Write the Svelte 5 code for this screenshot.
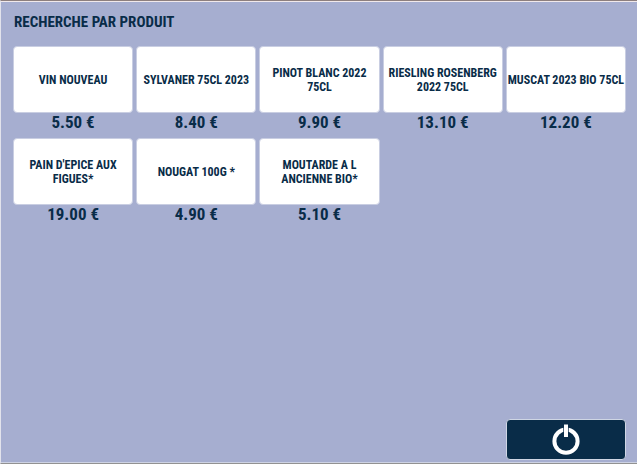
<script>
  const products = [
    { name: 'VIN NOUVEAU', price: '5.50 €' },
    { name: 'SYLVANER 75CL 2023', price: '8.40 €' },
    { name: 'PINOT BLANC 2022 75CL', price: '9.90 €' },
    { name: 'RIESLING ROSENBERG 2022 75CL', price: '13.10 €' },
    { name: 'MUSCAT 2023 BIO 75CL', price: '12.20 €' },
    { name: "PAIN D'EPICE AUX FIGUES*", price: '19.00 €' },
    { name: 'NOUGAT 100G *', price: '4.90 €' },
    { name: 'MOUTARDE A L ANCIENNE BIO*', price: '5.10 €' }
  ];
</script>

<main class="panel">
  <h1>RECHERCHE PAR PRODUIT</h1>
  <ul class="grid">
    {#each products as product}
      <li>
        <button class="product" type="button">{product.name}</button>
        <span class="price">{product.price}</span>
      </li>
    {/each}
  </ul>
  <footer>
    <button class="power" type="button" aria-label="Quitter">
      <svg width="30" height="32" viewBox="0 0 30 32" aria-hidden="true">
        <circle cx="15" cy="17.2" r="11.6" fill="none" stroke="#fff" stroke-width="4" />
        <path d="M12.3 2h5.4v7h-5.4z" fill="#092c48" />
        <path d="M13 0.5h4v12.5h-4z" fill="#fff" />
      </svg>
    </button>
  </footer>
</main>

<style>
  :global(body) {
    margin: 0;
    background: #a6aed0;
  }

  .panel {
    box-sizing: border-box;
    display: flex;
    flex-direction: column;
    min-height: 100vh;
    padding: 11px 11px 3px 12px;
    border-top: 1px solid #8d7f7e;
    border-left: 1px solid #e2e3ec;
    border-bottom: 1px solid #929292;
    background: #a6aed0;
    box-shadow: inset 0 1px #f1e9eb, inset 0 -1px #cdd2e3;
    color: #092c48;
    font-family: 'Roboto Condensed', 'Liberation Sans Narrow', Roboto, sans-serif;
    font-weight: 700;
  }

  h1 {
    margin: 0 0 14px 1px;
    font-size: 15px;
    line-height: 20px;
    font-weight: 700;
  }

  .grid {
    display: grid;
    grid-template-columns: repeat(5, minmax(0, 1fr));
    column-gap: 3px;
    row-gap: 6px;
    margin: 0;
    padding: 0;
    list-style: none;
  }

  li {
    display: flex;
    flex-direction: column;
  }

  button {
    box-sizing: border-box;
    font: inherit;
    color: inherit;
    cursor: pointer;
  }

  .product {
    display: flex;
    align-items: center;
    justify-content: center;
    height: 67px;
    padding: 0;
    border: 1px solid #c9cee2;
    border-radius: 4px;
    background: #fff;
    font-size: 12px;
    line-height: 14px;
    text-align: center;
  }

  .price {
    font-size: 17px;
    line-height: 19px;
    text-align: center;
  }

  footer {
    display: grid;
    grid-template-columns: repeat(5, minmax(0, 1fr));
    column-gap: 3px;
    margin-top: auto;
  }

  .power {
    grid-column: 5;
    display: flex;
    align-items: center;
    justify-content: center;
    height: 41px;
    padding: 0;
    border: 1px solid #cfd6e4;
    border-radius: 4px;
    background: #092c48;
  }
</style>
